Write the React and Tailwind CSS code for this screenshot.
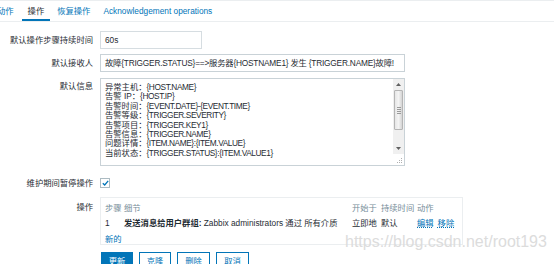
import React from 'react';

const Label = ({ children, className = '' }) => (
  <div className={`w-[100px] shrink-0 pr-[7px] text-right text-[#1f2c33] ${className}`}>{children}</div>
);

const messageLines = [
  ['异常主机：', '{HOST.NAME}'],
  ['告警 IP：', '{HOST.IP}'],
  ['告警时间：', '{EVENT.DATE}-{EVENT.TIME}'],
  ['告警等级：', '{TRIGGER.SEVERITY}'],
  ['告警项目：', '{TRIGGER.KEY1}'],
  ['告警信息：', '{TRIGGER.NAME}'],
  ['问题详情：', '{ITEM.NAME}:{ITEM.VALUE}'],
  ['当前状态：', '{TRIGGER.STATUS}:{ITEM.VALUE1}'],
];

const Scrollbar = () => (
  <div className="flex w-[11px] shrink-0 flex-col bg-[#f0f0f0]">
    <div className="flex h-[11px] items-center justify-center">
      <svg width="5" height="3" viewBox="0 0 5 3"><path d="M0 3 L2.5 0 L5 3 Z" fill="#606060" /></svg>
    </div>
    <div className="mx-[1px] flex h-[40px] items-center justify-center rounded-[1px] border border-[#b5b5b5] bg-gradient-to-r from-[#e6e6e6] via-[#f4f4f4] to-[#d4d4d4]">
      <div className="flex flex-col gap-[1px]">
        <div className="h-[1px] w-[4px] bg-[#9a9a9a]" />
        <div className="h-[1px] w-[4px] bg-[#9a9a9a]" />
        <div className="h-[1px] w-[4px] bg-[#9a9a9a]" />
        <div className="h-[1px] w-[4px] bg-[#9a9a9a]" />
      </div>
    </div>
    <div className="flex-1" />
    <div className="flex h-[11px] items-center justify-center">
      <svg width="5" height="3" viewBox="0 0 5 3"><path d="M0 0 L2.5 3 L5 0 Z" fill="#606060" /></svg>
    </div>
    <div className="flex h-[11px] items-end justify-end bg-white pb-[1px] pr-[1px]">
      <svg width="6" height="6" viewBox="0 0 6 6">
        <rect x="4" y="0" width="1" height="1" fill="#b0b0b0" />
        <rect x="2" y="2" width="1" height="1" fill="#b0b0b0" />
        <rect x="4" y="2" width="1" height="1" fill="#b0b0b0" />
        <rect x="0" y="4" width="1" height="1" fill="#b0b0b0" />
        <rect x="2" y="4" width="1" height="1" fill="#b0b0b0" />
        <rect x="4" y="4" width="1" height="1" fill="#b0b0b0" />
      </svg>
    </div>
  </div>
);

export default function App() {
  return (
    <div
      className="relative h-[264px] w-[554px] overflow-hidden bg-white text-[8.3px] leading-none text-[#1f2c33]"
      style={{ fontFamily: '"Liberation Sans", "Noto Sans CJK SC", sans-serif' }}
    >
      {/* Tabs */}
      <div className="flex h-[22px] items-stretch border-t border-b border-[#ebeef0]">
        <div className="-ml-[3px] flex items-center text-[#0275b8]">动作</div>
        <div className="ml-[8px] flex items-center border-b-2 border-[#0275b8] px-[6px] pt-[2px] text-[#1f2c33]">操作</div>
        <div className="ml-[7px] flex items-center text-[#0275b8]">恢复操作</div>
        <div className="ml-[13px] flex items-center text-[#0275b8]">Acknowledgement operations</div>
      </div>

      {/* Form */}
      <div className="mt-[9px] flex items-center">
        <Label>默认操作步骤持续时间</Label>
        <div className="flex h-[18px] w-[102px] items-center border border-[#d6dde1] px-[4px]">60s</div>
      </div>

      <div className="mt-[5px] flex items-center">
        <Label>默认接收人</Label>
        <div className="flex h-[18px] w-[305px] items-center overflow-hidden border border-[#c9d2d7] px-[4px] whitespace-nowrap tracking-[-0.2px]">
          故障{'{TRIGGER.STATUS}'}==&gt;服务器{'{HOSTNAME1}'} 发生 {'{TRIGGER.NAME}'}故障!
        </div>
      </div>

      <div className="mt-[6px] flex items-start">
        <Label className="pt-[4px]">默认信息</Label>
        <div className="flex h-[88px] w-[305px] border border-[#c9d2d7]">
          <div className="flex flex-1 flex-col pl-[4px] pt-[4px]">
            {messageLines.map(([k, v]) => (
              <div key={k} className="h-[9.4px] whitespace-nowrap leading-[9.4px]">
                {k}
                <span className="tracking-[-0.4px]">{v}</span>
              </div>
            ))}
          </div>
          <Scrollbar />
        </div>
      </div>

      <div className="mt-[12px] flex items-center">
        <Label>维护期间暂停操作</Label>
        <div className="flex h-[10px] w-[10px] items-center justify-center border border-[#acbbc2]">
          <svg width="7" height="6" viewBox="0 0 7 6">
            <path d="M0.8 3.2 L2.7 5 L6.2 0.9" fill="none" stroke="#0275b8" strokeWidth="1.3" />
          </svg>
        </div>
      </div>

      <div className="mt-[9px] flex items-start">
        <Label className="pt-[6px]">操作</Label>
        <div className="h-[48px] w-[363px] border border-[#ebeef0] px-[4px] pt-[6px]">
          <div className="grid grid-cols-[19px_228px_29px_36px_1fr] whitespace-nowrap">
            <div className="text-[#768d99]">步骤</div>
            <div className="text-[#768d99]">细节</div>
            <div className="text-[#768d99]">开始于</div>
            <div className="text-[#768d99]">持续时间</div>
            <div className="text-[#768d99]">动作</div>

            <div className="mt-[7px]">1</div>
            <div className="mt-[7px]">
              <span className="font-bold">发送消息给用户群组:</span> Zabbix administrators 通过 所有介质
            </div>
            <div className="mt-[7px]">立即地</div>
            <div className="mt-[7px]">默认</div>
            <div className="mt-[7px] flex gap-[4px] text-[#0275b8]">
              <span className="underline decoration-dotted">编辑</span>
              <span className="underline decoration-dotted">移除</span>
            </div>

            <div className="col-span-5 mt-[7px] text-[#0275b8]">新的</div>
          </div>
        </div>
      </div>

      <div className="ml-[101px] mt-[7px] flex gap-[6px]">
        <div className="flex h-[18px] w-[32px] items-center justify-center bg-[#0275b8] text-white">更新</div>
        <div className="flex h-[18px] w-[32px] items-center justify-center border border-[#0275b8] text-[#0275b8]">克隆</div>
        <div className="flex h-[18px] w-[33px] items-center justify-center border border-[#0275b8] text-[#0275b8]">删除</div>
        <div className="flex h-[18px] w-[33px] items-center justify-center border border-[#0275b8] text-[#0275b8]">取消</div>
      </div>

      {/* Watermark */}
      <div className="pointer-events-none absolute left-[345px] top-[234px] whitespace-nowrap text-[16px] text-[#dcdcdc]">
        https://blog.csdn.net/root193
      </div>
    </div>
  );
}
